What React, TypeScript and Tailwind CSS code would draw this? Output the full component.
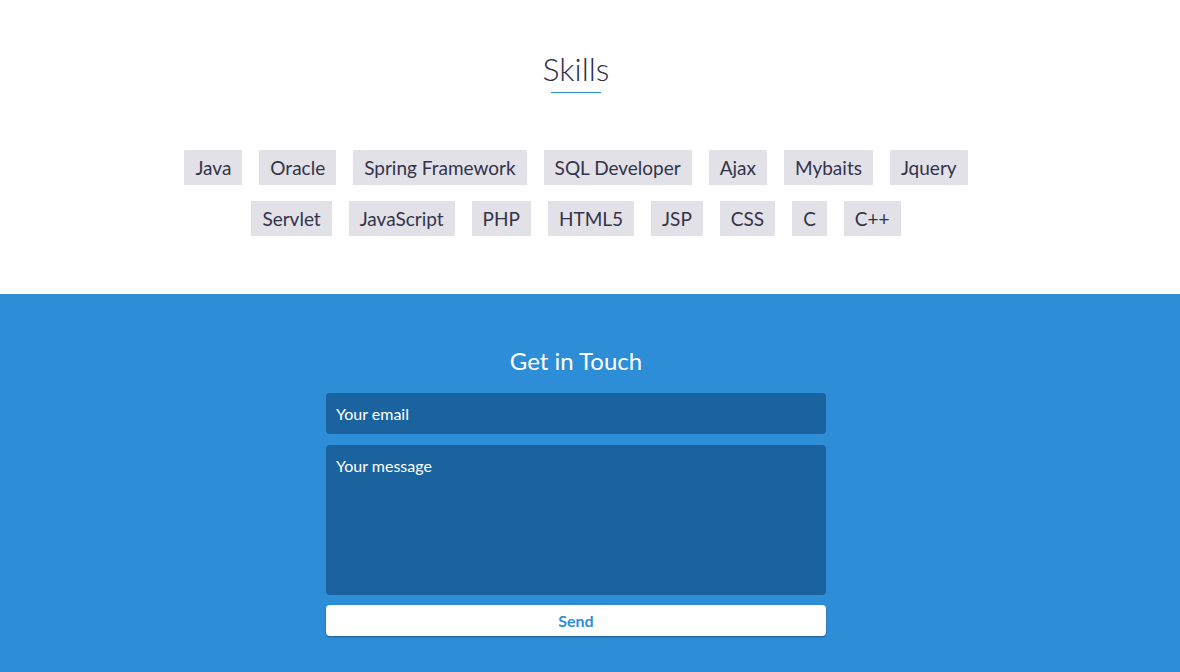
import React from "react";

const row = ["Java","Oracle","Spring Framework","SQL Developer","Ajax","Mybaits","Jquery","Servlet","JavaScript","PHP","HTML5","JSP","CSS","C","C++"];

export default function App() {
  return (
    <div className="w-[1180px] min-h-[672px] bg-white" style={{ fontFamily: "Lato, 'Noto Sans', sans-serif" }}>
      <section className="bg-white pt-[50px] pb-[58px]">
        <div className="w-[1152px] flex flex-col items-center">
          <h2 className="text-[32px] leading-[38px] font-light text-[#2c2c48]">Skills</h2>
          <div className="mt-[4px] w-[50px] h-[1px] bg-[#2e8ed8]"></div>
          <div className="mt-[57px] w-[800px] flex flex-wrap justify-center gap-x-[17px] gap-y-[16px]">
            {row.map((s) => (
              <span key={s} className="h-[35px] pt-[1px] px-[11px] flex items-center bg-[#e1e1e7] text-[19px] text-[#33334a]">{s}</span>
            ))}
          </div>
        </div>
      </section>
      <section className="bg-[#2d8dd7] pt-[52px] pb-[40px]">
        <div className="w-[1152px] flex flex-col items-center">
          <h3 className="text-[24px] leading-[30px] text-white">Get in Touch</h3>
          <div className="mt-[17px] w-[500px] flex flex-col">
            <div className="h-[41px] rounded-[4px] bg-[#1b639e] px-[10px] flex items-center text-[16px] text-white">Your email</div>
            <div className="mt-[11px] h-[150px] rounded-[4px] bg-[#1b639e] px-[10px] pt-[9px] text-[16px] text-white">Your message</div>
            <div className="mt-[10px] h-[31px] rounded-[4px] bg-white shadow-[0_1px_2px_rgba(0,0,0,0.35)] flex items-center justify-center text-[16px] font-bold text-[#2e8ed8]">Send</div>
          </div>
        </div>
      </section>
    </div>
  );
}
